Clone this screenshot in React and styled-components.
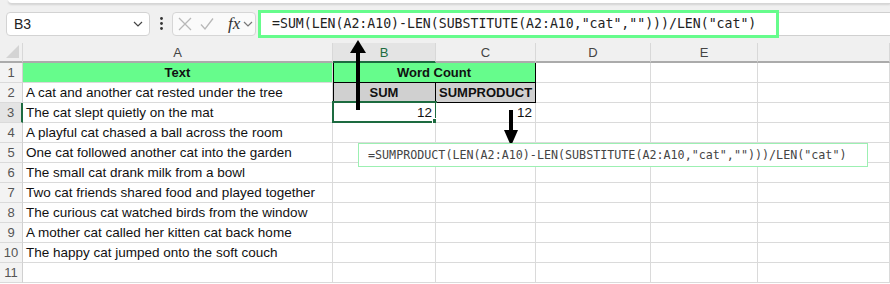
import React from 'react';
import styled, { createGlobalStyle } from 'styled-components';

const GREEN = '#66fc8c';
const GRAY = '#d0d0d0';
const GRID = '#dadada';

const W = { A: 310, B: 103, C: 100, D: 115, E: 107 };

const texts = [
  "A cat and another cat rested under the tree",
  "The cat slept quietly on the mat",
  "A playful cat chased a ball across the room",
  "One cat followed another cat into the garden",
  "The small cat drank milk from a bowl",
  "Two cat friends shared food and played together",
  "The curious cat watched birds from the window",
  "A mother cat called her kitten cat back home",
  "The happy cat jumped onto the soft couch"
];

const FORMULA_SUM = '=SUM(LEN(A2:A10)-LEN(SUBSTITUTE(A2:A10,"cat","")))/LEN("cat")';
const FORMULA_SP = '=SUMPRODUCT(LEN(A2:A10)-LEN(SUBSTITUTE(A2:A10,"cat","")))/LEN("cat")';

const Global = createGlobalStyle`
  body {
    margin: 0;
    background: #fff;
    font-family: "Liberation Sans", Arial, sans-serif;
  }
`;

const Page = styled.div`
  position: relative;
  width: 890px;
  height: 284px;
  overflow: hidden;
  background: #fff;
`;

const Top = styled.div`
  background: #f0f0f0;
`;

const TopStrip = styled.div`
  height: 3px;
  margin-left: 8px;
  background: #fff;
  border-bottom: 1px solid #d6d6d6;
  border-bottom-left-radius: 6px;
  box-shadow: 0 1px 2px rgba(0, 0, 0, 0.12);
`;

const Toolbar = styled.div`
  display: flex;
  align-items: center;
  height: 39px;
  padding-left: 6px;
`;

const NameBox = styled.div`
  width: 144px;
  height: 24px;
  box-sizing: border-box;
  display: flex;
  align-items: center;
  justify-content: space-between;
  padding: 0 6px 0 7px;
  background: #fff;
  border: 1px solid #d3d3d3;
  border-radius: 4px;
  font-size: 14px;
  color: #222;
`;

const Dots = styled.svg`
  margin: 0 9px 0 10px;
`;

const FuncBox = styled.div`
  width: 84px;
  height: 24px;
  box-sizing: border-box;
  display: flex;
  align-items: center;
  padding-left: 5px;
  background: #fafafa;
  border: 1px solid #d6d6d6;
  border-radius: 4px;
`;

const Fx = styled.span`
  font-family: "Liberation Serif", "Times New Roman", serif;
  font-style: italic;
  font-size: 17px;
  color: #333;
  margin: 0 3px 0 14px;
`;

const FormulaWrap = styled.div`
  flex: 1;
  display: flex;
  align-items: center;
  margin-left: 2px;
`;

const Highlight = styled.div`
  width: 521px;
  height: 28px;
  box-sizing: border-box;
  border: 3px solid ${GREEN};
  background: #fff;
  padding-left: 11px;
  font-family: "DejaVu Sans Mono", monospace;
  font-size: 13.2px;
  line-height: 22px;
  color: #222;
  white-space: nowrap;
`;

const InputRest = styled.div`
  flex: 1;
  height: 24px;
  box-sizing: border-box;
  background: #fff;
  border-top: 1px solid #d0d0d0;
  border-bottom: 1px solid #d0d0d0;
`;

const Row = styled.div`
  display: flex;
  height: ${p => p.$h || 20}px;
`;

const Corner = styled.div`
  flex: 0 0 23px;
  box-sizing: border-box;
  display: flex;
  align-items: flex-end;
  justify-content: flex-end;
  padding: 0 3px 3px 0;
  background: #f0f0f0;
  border-right: 1px solid #d8d8d8;
  border-bottom: 2px solid #ababab;
`;

const ColHead = styled.div`
  flex: ${p => (p.$w ? `0 0 ${p.$w}px` : 1)};
  min-width: 0;
  box-sizing: border-box;
  text-align: center;
  font-size: 13px;
  line-height: 19px;
  color: ${p => (p.$active ? '#1d6b40' : '#444')};
  background: ${p => (p.$active ? '#e4e4e4' : '#f0f0f0')};
  border-right: 1px solid #d8d8d8;
  border-bottom: 2px solid ${p => (p.$active ? '#1d6b40' : '#ababab')};
`;

const RowHead = styled.div`
  flex: 0 0 23px;
  box-sizing: border-box;
  text-align: center;
  font-size: 13px;
  line-height: 20px;
  color: #555;
  background: ${p => (p.$active ? '#e4e4e4' : '#f3f3f3')};
  border-right: ${p => (p.$active ? '2px solid #1d6b40' : '1px solid #d0d0d0')};
  border-bottom: 1px solid ${GRID};
`;

const fills = { green: GREEN, gray: GRAY };

const Cell = styled.div`
  flex: ${p => (p.$w ? `0 0 ${p.$w}px` : 1)};
  min-width: 0;
  position: relative;
  box-sizing: border-box;
  padding: 0 3px;
  font-size: ${p => (p.$bold ? 13 : 13.5)}px;
  line-height: 20px;
  color: #111;
  white-space: nowrap;
  text-align: ${p => p.$align || 'left'};
  font-weight: ${p => (p.$bold ? 700 : 400)};
  background: ${p => fills[p.$fill] || '#fff'};
  border-right: 1px solid ${p => (p.$edgeR ? '#000' : GRID)};
  border-bottom: 1px solid ${p => (p.$edgeB ? '#000' : GRID)};
  box-shadow: ${p => (p.$edgeL ? 'inset 1px 0 0 #000' : 'none')};
`;

const Selection = styled.div`
  position: absolute;
  left: -1px;
  top: -2px;
  right: -2px;
  bottom: -1px;
  border: 2px solid #1d6b40;
  pointer-events: none;
  &::after {
    content: "";
    position: absolute;
    right: -4px;
    bottom: -4px;
    width: 5px;
    height: 5px;
    background: #1d6b40;
    border: 1px solid #fff;
  }
`;

const Overlay = styled.svg`
  position: absolute;
`;

const Note = styled.div`
  position: absolute;
  left: 358px;
  top: 143px;
  width: 510px;
  height: 24px;
  box-sizing: border-box;
  padding-left: 9px;
  background: #fff;
  border: 1px solid #9cf0b2;
  font-family: "DejaVu Sans Mono", monospace;
  font-size: 11.7px;
  line-height: 22px;
  color: #444;
  white-space: nowrap;
`;

const Chevron = ({ color = '#444' }) => (
  <svg width="10" height="6" viewBox="0 0 10 6">
    <path d="M1 1l4 4 4-4" fill="none" stroke={color} strokeWidth="1.2" />
  </svg>
);

const rows = [
  [
    { w: W.A, text: 'Text', fill: 'green', bold: true, align: 'center' },
    { w: W.B + W.C, text: 'Word Count', fill: 'green', bold: true, align: 'center', edgeL: true, edgeR: true, edgeB: true }
  ],
  [
    { w: W.A, text: texts[0] },
    { w: W.B, text: 'SUM', fill: 'gray', bold: true, align: 'center', edgeL: true, edgeR: true, edgeB: true },
    { w: W.C, text: 'SUMPRODUCT', fill: 'gray', bold: true, align: 'center', edgeR: true, edgeB: true }
  ],
  [
    { w: W.A, text: texts[1] },
    { w: W.B, text: '12', align: 'right', selected: true },
    { w: W.C, text: '12', align: 'right' }
  ],
  ...texts.slice(2).map(t => [{ w: W.A, text: t }, { w: W.B }, { w: W.C }]),
  [{ w: W.A }, { w: W.B }, { w: W.C }]
];

export default function App() {
  return (
    <Page>
      <Global />
      <Top>
        <TopStrip />
        <Toolbar>
          <NameBox>
            <span>B3</span>
            <Chevron />
          </NameBox>
          <Dots width="3" height="13" viewBox="0 0 3 13">
            <circle cx="1.5" cy="1.5" r="1.4" fill="#333" />
            <circle cx="1.5" cy="6.5" r="1.4" fill="#333" />
            <circle cx="1.5" cy="11.5" r="1.4" fill="#333" />
          </Dots>
          <FuncBox>
            <svg width="14" height="14" viewBox="0 0 14 14">
              <path d="M1 1l12 12M13 1L1 13" stroke="#b8b8b8" strokeWidth="1.3" />
            </svg>
            <svg width="14" height="14" viewBox="0 0 14 14" style={{ marginLeft: 8 }}>
              <path d="M1 7.5l4 4.5L13 1.5" fill="none" stroke="#b8b8b8" strokeWidth="1.3" />
            </svg>
            <Fx>fx</Fx>
            <Chevron color="#777" />
          </FuncBox>
          <FormulaWrap>
            <Highlight>{FORMULA_SUM}</Highlight>
            <InputRest />
          </FormulaWrap>
        </Toolbar>
        <Row $h={20}>
          <Corner>
            <svg width="13" height="13" viewBox="0 0 13 13">
              <path d="M13 0V13H0Z" fill="#d4d4d4" />
            </svg>
          </Corner>
          <ColHead $w={W.A}>A</ColHead>
          <ColHead $w={W.B} $active>B</ColHead>
          <ColHead $w={W.C}>C</ColHead>
          <ColHead $w={W.D}>D</ColHead>
          <ColHead $w={W.E}>E</ColHead>
          <ColHead />
        </Row>
      </Top>

      {rows.map((cells, i) => (
        <Row key={i}>
          <RowHead $active={i === 2}>{i + 1}</RowHead>
          {cells.map((c, j) => (
            <Cell
              key={j}
              $w={c.w}
              $fill={c.fill}
              $bold={c.bold}
              $align={c.align}
              $edgeL={c.edgeL}
              $edgeR={c.edgeR}
              $edgeB={c.edgeB}
            >
              {c.text}
              {c.selected && <Selection />}
            </Cell>
          ))}
          <Cell $w={W.D} />
          <Cell $w={W.E} />
          <Cell />
        </Row>
      ))}

      <Overlay width="20" height="74" viewBox="0 0 20 74" style={{ left: 348, top: 38 }}>
        <rect x="8" y="13" width="4" height="59" fill="#000" />
        <path d="M2 15H18L10 2Z" fill="#000" />
      </Overlay>
      <Overlay width="18" height="40" viewBox="0 0 18 40" style={{ left: 502, top: 108 }}>
        <rect x="7" y="2" width="4" height="22" fill="#000" />
        <path d="M2 22H16L9 38Z" fill="#000" />
      </Overlay>
      <Note>{FORMULA_SP}</Note>
    </Page>
  );
}
